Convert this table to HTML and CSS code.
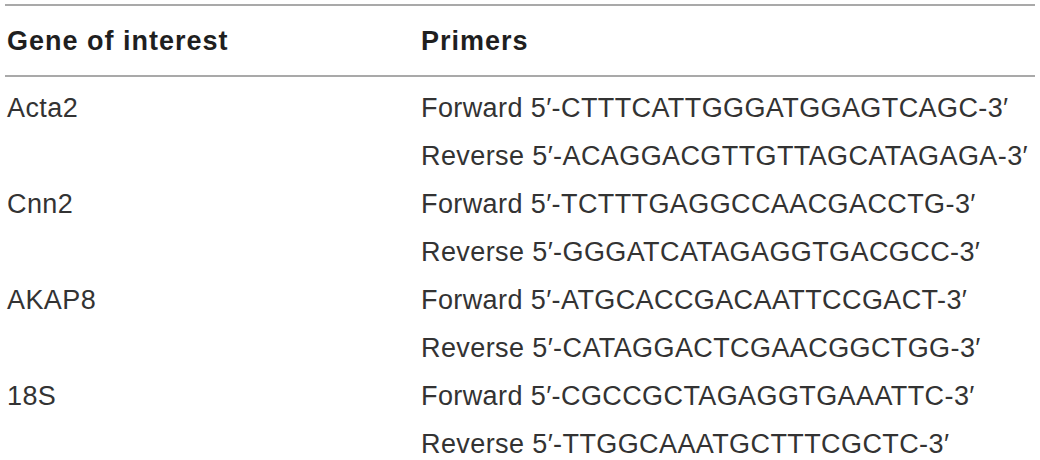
FILE: index.html
```html
<!DOCTYPE html>
<html lang="en">
<head>
<meta charset="utf-8">
<title>Primers</title>
<link rel="stylesheet" href="styles.css">
</head>
<body>
<div class="table-wrap">
  <table class="primers">
    <thead>
      <tr>
        <th class="col-gene">Gene of interest</th>
        <th class="col-primer">Primers</th>
      </tr>
    </thead>
    <tbody>
      <tr class="first"><td>Acta2</td><td>Forward 5′-CTTTCATTGGGATGGAGTCAGC-3′</td></tr>
      <tr><td></td><td>Reverse 5′-ACAGGACGTTGTTAGCATAGAGA-3′</td></tr>
      <tr><td>Cnn2</td><td>Forward 5′-TCTTTGAGGCCAACGACCTG-3′</td></tr>
      <tr><td></td><td>Reverse 5′-GGGATCATAGAGGTGACGCC-3′</td></tr>
      <tr><td>AKAP8</td><td>Forward 5′-ATGCACCGACAATTCCGACT-3′</td></tr>
      <tr><td></td><td>Reverse 5′-CATAGGACTCGAACGGCTGG-3′</td></tr>
      <tr><td>18S</td><td>Forward 5′-CGCCGCTAGAGGTGAAATTC-3′</td></tr>
      <tr><td></td><td>Reverse 5′-TTGGCAAATGCTTTCGCTC-3′</td></tr>
    </tbody>
  </table>
</div>
</body>
</html>
```

FILE: styles.css
```css
html, body {
  margin: 0;
  padding: 0;
  background: #ffffff;
}

body {
  font-family: "Liberation Sans", Arial, sans-serif;
  color: #333333;
  overflow: hidden;
}

.table-wrap {
  padding: 4px 6px 0 5px;
}

.primers {
  border-collapse: collapse;
  width: 1030px;
}

.primers th,
.primers td {
  text-align: left;
  vertical-align: top;
  white-space: nowrap;
  padding: 0 0 0 2px;
  font-size: 27px;
  line-height: 48px;
}

.primers thead th {
  font-weight: bold;
  color: #1f1f1f;
  letter-spacing: 1px;
  padding-top: 11px;
  padding-bottom: 10px;
  border-top: 2px solid #a9a9a9;
  border-bottom: 2px solid #a9a9a9;
}

.primers .col-gene {
  width: 412px;
}

.primers td {
  letter-spacing: 0.4px;
}

.primers tbody tr.first td {
  padding-top: 7px;
}
```
